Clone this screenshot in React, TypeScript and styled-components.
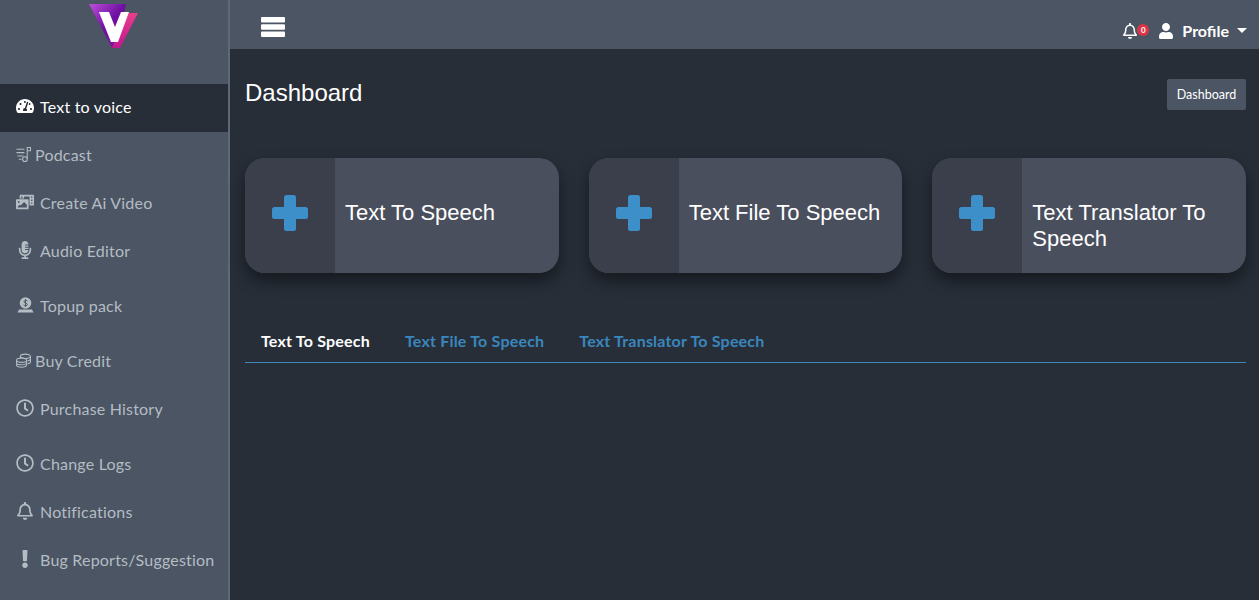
import { FC, ReactNode } from "react";
import styled, { createGlobalStyle } from "styled-components";
import {
  FaExclamation,
  FaMicrophoneAlt,
  FaPhotoVideo,
  FaRegBell,
  FaRegClock,
  FaTachometerAlt,
  FaUser,
} from "react-icons/fa";

const GlobalStyle = createGlobalStyle`
  html, body {
    margin: 0;
    padding: 0;
    background: #272e38;
  }
  * {
    box-sizing: border-box;
  }
`;

const Page = styled.div`
  display: flex;
  width: 100%;
  height: 600px;
  overflow: hidden;
  background: #272e38;
  font-family: Lato, "Noto Sans", sans-serif;
`;

const SideBar = styled.aside`
  width: 230px;
  flex-shrink: 0;
  background: #4b5563;
  border-right: 2px solid #5f6976;
  display: flex;
  flex-direction: column;
`;

const LogoBox = styled.div`
  height: 84px;
  display: flex;
  justify-content: center;
  align-items: flex-start;
  padding-top: 3px;
`;

const NavItem = styled.div<{ $active?: boolean; $gap?: boolean; $tight?: boolean }>`
  height: 48px;
  flex-shrink: 0;
  display: flex;
  align-items: center;
  gap: ${(p) => (p.$tight ? "4px" : "5px")};
  padding-left: ${(p) => (p.$tight ? "16px" : "15px")};
  padding-bottom: 4px;
  margin-top: ${(p) => (p.$gap ? "7px" : "0")};
  font-size: 16px;
  letter-spacing: 0.2px;
  color: ${(p) => (p.$active ? "#ffffff" : "#b4bcc4")};
  background: ${(p) => (p.$active ? "#272e38" : "transparent")};
`;

const NavIcon = styled.span<{ $tight?: boolean }>`
  width: ${(p) => (p.$tight ? "15px" : "20px")};
  display: flex;
  justify-content: center;
  align-items: center;
  flex-shrink: 0;
  font-size: 18px;
`;

const Main = styled.main`
  flex: 1;
  min-width: 0;
  display: flex;
  flex-direction: column;
`;

const TopBar = styled.header`
  height: 49px;
  flex-shrink: 0;
  background: #4b5563;
  display: flex;
  align-items: center;
  justify-content: space-between;
  padding: 0 12px 0 31px;
  color: #ffffff;
`;

const MenuButton = styled.div`
  display: flex;
  margin-top: 5px;
`;

const TopRight = styled.div`
  display: flex;
  align-items: center;
  margin-top: 12px;
`;

const BellWrap = styled.div`
  position: relative;
  display: flex;
  font-size: 16px;
  margin-right: 20px;
`;

const Badge = styled.span`
  position: absolute;
  top: 1px;
  right: -11px;
  width: 12px;
  height: 12px;
  border-radius: 50%;
  background: #dc3545;
  color: #ffffff;
  font-size: 8px;
  font-weight: 700;
  line-height: 12px;
  text-align: center;
`;

const ProfileName = styled.span`
  font-size: 16px;
  font-weight: 700;
  margin-left: 8px;
`;

const Caret = styled.span`
  width: 0;
  height: 0;
  margin-left: 8px;
  border-left: 5px solid transparent;
  border-right: 5px solid transparent;
  border-top: 5px solid #ffffff;
`;

const Content = styled.div`
  padding: 0 13px 0 15px;
`;

const TitleRow = styled.div`
  display: flex;
  justify-content: space-between;
  align-items: flex-start;
  padding-top: 30px;
  height: 109px;
`;

const Title = styled.h1`
  margin: 0;
  font-family: "Liberation Sans", Arial, sans-serif;
  font-size: 24px;
  line-height: 28px;
  font-weight: 400;
  color: #ffffff;
`;

const Crumb = styled.div`
  width: 79px;
  height: 31px;
  display: flex;
  align-items: center;
  justify-content: center;
  padding-bottom: 1px;
  background: #4b5563;
  border-radius: 2px;
  color: #ffffff;
  font-size: 12.5px;
`;

const CardGrid = styled.div`
  display: grid;
  grid-template-columns: repeat(3, 1fr);
  gap: 30px;
`;

const Card = styled.div`
  height: 115px;
  display: flex;
  border-radius: 20px;
  overflow: hidden;
  background: #4a4f5e;
  box-shadow: 0 8px 16px rgba(0, 0, 0, 0.45);
`;

const CardIcon = styled.div`
  width: 90px;
  flex-shrink: 0;
  display: flex;
  align-items: center;
  justify-content: center;
  padding-bottom: 6px;
  background: #3a3f4b;
`;

const CardText = styled.div`
  flex: 1;
  padding: 42px 20px 0 10px;
  font-family: "Liberation Sans", Arial, sans-serif;
  font-size: 22px;
  line-height: 26px;
  color: #ffffff;
`;

const Tabs = styled.div`
  display: flex;
  margin-top: 47px;
  height: 43px;
  border-bottom: 1px solid #3f88b8;
`;

const Tab = styled.div<{ $active?: boolean }>`
  padding: 11px 19px 0 16px;
  font-size: 16px;
  font-weight: 700;
  letter-spacing: 0.2px;
  color: ${(p) => (p.$active ? "#ffffff" : "#3a86bd")};
`;

const Logo: FC = () => (
  <svg width="52" height="46" viewBox="0 0 52 46">
    <defs>
      <linearGradient id="logoLeft" x1="0" y1="0" x2="1" y2="1">
        <stop offset="0" stopColor="#c04fd8" />
        <stop offset="0.5" stopColor="#6d0fa0" />
        <stop offset="1" stopColor="#8a1aa0" />
      </linearGradient>
      <linearGradient id="logoRight" x1="0" y1="0" x2="0" y2="1">
        <stop offset="0" stopColor="#e83e8c" />
        <stop offset="1" stopColor="#c2188f" />
      </linearGradient>
    </defs>
    <polygon points="1,1 38,1 28,45 24,45" fill="url(#logoLeft)" />
    <polygon points="38,10 50,10 32,45 24,45" fill="url(#logoRight)" />
    <polygon points="11,9 21,9 27,24 33,9 41,9 30,39 23,39" fill="#ffffff" />
  </svg>
);

const BarsIcon: FC = () => (
  <svg width="24" height="20" viewBox="0 0 24 20" fill="#ffffff">
    <rect x="0" y="0" width="24" height="5.6" rx="1" />
    <rect x="0" y="7.2" width="24" height="5.6" rx="1" />
    <rect x="0" y="14.4" width="24" height="5.6" rx="1" />
  </svg>
);

const PlusIcon: FC = () => (
  <svg width="36" height="36" viewBox="0 0 36 36" fill="#3d8fc9">
    <rect x="12" y="0" width="12" height="36" rx="2.5" />
    <rect x="0" y="12" width="36" height="12" rx="2.5" />
  </svg>
);

const PodcastIcon: FC = () => (
  <svg width="16" height="17" viewBox="0 0 16 17" fill="none" stroke="currentColor" strokeWidth="1.1">
    <path d="M0.5 3H9M0.5 6.5H9M1.5 10H8M3 13.5H6" />
    <path d="M12 13V1H15.5V4.5H12" />
    <circle cx="9.5" cy="13.5" r="2.5" />
  </svg>
);

const CoinsIcon: FC = () => (
  <svg width="16" height="15" viewBox="0 0 16 15" fill="none" stroke="currentColor" strokeWidth="1.1">
    <ellipse cx="10" cy="3" rx="5.4" ry="2.3" />
    <path d="M15.4 3V9C15.4 10 14 10.8 12.5 11M4.6 3.5V6" />
    <path d="M15.4 6C15.4 7 14 7.8 12.5 8" />
    <ellipse cx="6" cy="7.2" rx="5.4" ry="2.3" />
    <path d="M0.6 7.2V12.3C0.6 13.6 3 14.6 6 14.6S11.4 13.6 11.4 12.3V7.2M0.6 9.8C0.6 11.1 3 12 6 12S11.4 11.1 11.4 9.8" />
  </svg>
);

const TopupIcon: FC = () => (
  <svg width="17" height="16" viewBox="0 0 17 16">
    <circle cx="8.5" cy="6" r="5.8" fill="currentColor" />
    <path d="M2 12.5H15L16.5 15.5H0.5Z" fill="currentColor" />
    <path d="M10.5 4C10 3.2 7 3 7 4.6S10.3 6 10.3 7.6 7 9 6.5 8M8.5 2.2V9.8" stroke="#4b5563" strokeWidth="1" fill="none" />
  </svg>
);

type NavEntry = {
  id: number;
  text: string;
  icon: ReactNode;
  active?: boolean;
  gap?: boolean;
  tight?: boolean;
};

const nav: NavEntry[] = [
  { id: 1, text: "Text to voice", icon: <FaTachometerAlt />, active: true },
  { id: 2, text: "Podcast", icon: <PodcastIcon />, tight: true },
  { id: 3, text: "Create Ai Video", icon: <FaPhotoVideo /> },
  { id: 4, text: "Audio Editor", icon: <FaMicrophoneAlt /> },
  { id: 5, text: "Topup pack", icon: <TopupIcon />, gap: true },
  { id: 6, text: "Buy Credit", icon: <CoinsIcon />, gap: true, tight: true },
  { id: 7, text: "Purchase History", icon: <FaRegClock /> },
  { id: 8, text: "Change Logs", icon: <FaRegClock />, gap: true },
  { id: 9, text: "Notifications", icon: <FaRegBell /> },
  { id: 10, text: "Bug Reports/Suggestion", icon: <FaExclamation /> },
];

const cards = [
  { id: 1, text: "Text To Speech" },
  { id: 2, text: "Text File To Speech" },
  { id: 3, text: "Text Translator To Speech" },
];

const App: FC = () => {
  return (
    <>
      <GlobalStyle />
      <Page>
        <SideBar>
          <LogoBox>
            <Logo />
          </LogoBox>
          {nav.map((item) => (
            <NavItem key={item.id} $active={item.active} $gap={item.gap} $tight={item.tight}>
              <NavIcon $tight={item.tight}>{item.icon}</NavIcon>
              <span>{item.text}</span>
            </NavItem>
          ))}
        </SideBar>
        <Main>
          <TopBar>
            <MenuButton>
              <BarsIcon />
            </MenuButton>
            <TopRight>
              <BellWrap>
                <FaRegBell />
                <Badge>0</Badge>
              </BellWrap>
              <FaUser size={16} />
              <ProfileName>Profile</ProfileName>
              <Caret />
            </TopRight>
          </TopBar>
          <Content>
            <TitleRow>
              <Title>Dashboard</Title>
              <Crumb>Dashboard</Crumb>
            </TitleRow>
            <CardGrid>
              {cards.map((card) => (
                <Card key={card.id}>
                  <CardIcon>
                    <PlusIcon />
                  </CardIcon>
                  <CardText>{card.text}</CardText>
                </Card>
              ))}
            </CardGrid>
            <Tabs>
              {cards.map((card, i) => (
                <Tab key={card.id} $active={i === 0}>
                  {card.text}
                </Tab>
              ))}
            </Tabs>
          </Content>
        </Main>
      </Page>
    </>
  );
};

export default App;
